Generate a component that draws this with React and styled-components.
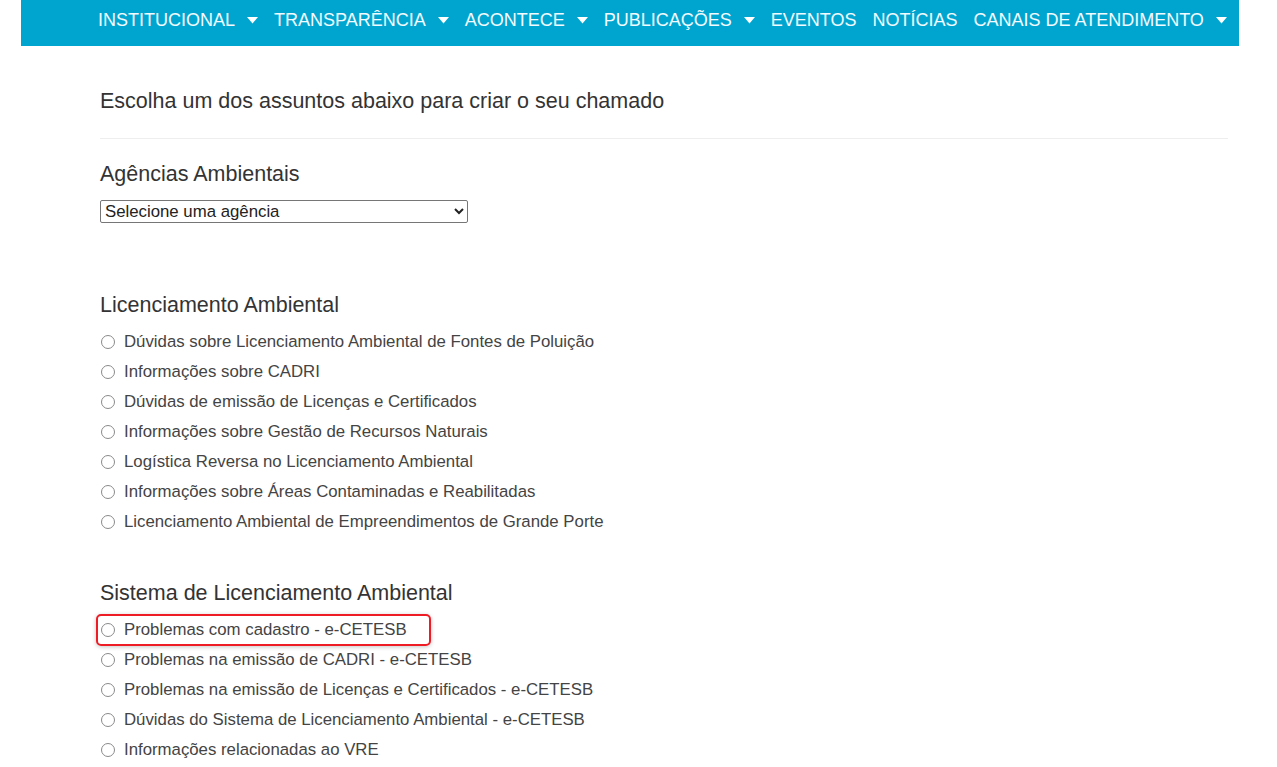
import React from "react";
import styled, { createGlobalStyle } from "styled-components";

const Global = createGlobalStyle`
  html, body { margin: 0; padding: 0; background: #fff; }
  body { font-family: "Liberation Sans", Arial, sans-serif; color: #333; }
`;

const Nav = styled.nav`
  margin-left: 21px;
  width: 1218px;
  height: 46px;
  background: #00a5cf;
  display: flex;
  align-items: flex-start;
  padding: 9px 0 0 77px;
  box-sizing: border-box;
  gap: 16px;
`;

const NavItem = styled.span`
  font-family: "Liberation Sans", Arial, sans-serif;
  font-size: 18px;
  line-height: 22px;
  color: #f2fbff;
  display: inline-flex;
  align-items: center;
  gap: 12px;
  white-space: nowrap;
`;

const Caret = styled.svg`
  width: 11px;
  height: 7px;
  fill: #fff;
`;

const Main = styled.main`
  margin-left: 100px;
  width: 1128px;
  padding-top: 43px;
`;

const Lead = styled.h1`
  margin: 0;
  font-weight: normal;
  font-size: 21.5px;
  line-height: 24px;
  color: #333;
  padding-bottom: 25px;
  border-bottom: 1px solid #eee;
`;

const SectionTitle = styled.h2`
  margin: ${(p) => p.$top}px 0 0;
  font-weight: normal;
  font-size: 21.5px;
  line-height: 24px;
  color: #333;
`;

const Select = styled.select`
  display: block;
  margin-top: 14px;
  width: 368px;
  height: 23px;
  font-family: "Liberation Sans", Arial, sans-serif;
  font-size: 16.8px;
  line-height: 21px;
  color: #222;
  border: 1px solid #767676;
  border-radius: 2px;
  background: #fff;
  padding: 0 0;
`;

const List = styled.ul`
  list-style: none;
  margin: 10px 0 0;
  padding: 0;
`;

const Row = styled.li`
  height: 30px;
  display: flex;
  align-items: center;
`;

const Option = styled.label`
  display: inline-flex;
  align-items: center;
  gap: 9px;
  font-size: 16.8px;
  color: #444;
  box-sizing: border-box;
  padding-left: 1px;

  &[data-hl="true"] {
    height: 32px;
    margin: -1px 0 -1px -4px;
    padding: 0 22px 0 3px;
    border: 2px solid #ee1c25;
    border-radius: 5px;
    box-shadow: 0 1px 4px rgba(0, 0, 0, 0.22);
  }
`;

const Radio = styled.span`
  width: 14px;
  height: 14px;
  border: 1px solid #8a8a8a;
  border-radius: 50%;
  box-sizing: border-box;
  background: #fff;
  flex: none;
`;

const navItems = [
  ["INSTITUCIONAL", true],
  ["TRANSPARÊNCIA", true],
  ["ACONTECE", true],
  ["PUBLICAÇÕES", true],
  ["EVENTOS", false],
  ["NOTÍCIAS", false],
  ["CANAIS DE ATENDIMENTO", true],
];

const lic = [
  "Dúvidas sobre Licenciamento Ambiental de Fontes de Poluição",
  "Informações sobre CADRI",
  "Dúvidas de emissão de Licenças e Certificados",
  "Informações sobre Gestão de Recursos Naturais",
  "Logística Reversa no Licenciamento Ambiental",
  "Informações sobre Áreas Contaminadas e Reabilitadas",
  "Licenciamento Ambiental de Empreendimentos de Grande Porte",
];

const sis = [
  "Problemas com cadastro - e-CETESB",
  "Problemas na emissão de CADRI - e-CETESB",
  "Problemas na emissão de Licenças e Certificados - e-CETESB",
  "Dúvidas do Sistema de Licenciamento Ambiental - e-CETESB",
  "Informações relacionadas ao VRE",
];

function Items({ items, hl }) {
  return (
    <List>
      {items.map((t, i) => (
        <Row key={t}>
          <Option data-hl={hl === i ? "true" : "false"}>
            <Radio />
            {t}
          </Option>
        </Row>
      ))}
    </List>
  );
}

export default function App() {
  return (
    <>
      <Global />
      <Nav>
        {navItems.map(([t, c]) => (
          <NavItem key={t}>
            {t}
            {c && (
              <Caret viewBox="0 0 11 7">
                <path d="M0 0 H11 L5.5 6.5 Z" />
              </Caret>
            )}
          </NavItem>
        ))}
      </Nav>
      <Main>
        <Lead>Escolha um dos assuntos abaixo para criar o seu chamado</Lead>
        <SectionTitle $top={23}>Agências Ambientais</SectionTitle>
        <Select defaultValue="">
          <option value="">Selecione uma agência</option>
        </Select>
        <SectionTitle $top={70}>Licenciamento Ambiental</SectionTitle>
        <Items items={lic} />
        <SectionTitle $top={44}>Sistema de Licenciamento Ambiental</SectionTitle>
        <Items items={sis} hl={0} />
      </Main>
    </>
  );
}
